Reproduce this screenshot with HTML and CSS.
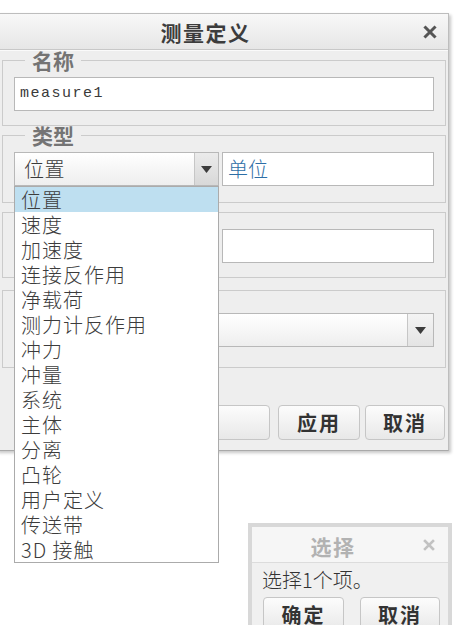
FILE: index.html
```html
<!DOCTYPE html>
<html lang="zh-CN">
<head>
<meta charset="utf-8">
<title>测量定义</title>
<link rel="stylesheet" href="styles.css">
</head>
<body>
<div class="desk">
  <div class="win main-win">
    <div class="titlebar">
      <span class="title">测量定义</span>
      <span class="close">
        <svg width="14" height="14" viewBox="0 0 14 14"><path d="M2.5 2.5 L11.5 11.5 M11.5 2.5 L2.5 11.5" stroke="#555" stroke-width="3" stroke-linecap="square"/></svg>
      </span>
    </div>
    <div class="win-body">
      <fieldset class="group g-name">
        <legend>名称</legend>
        <div class="field mono">measure1</div>
      </fieldset>
      <fieldset class="group g-type">
        <legend>类型</legend>
        <div class="row">
          <div class="select sel-type">
            <span class="sel-text">位置</span>
            <span class="sel-arrow"><svg width="11" height="7" viewBox="0 0 11 7"><polygon points="0,0 11,0 5.5,7" fill="#3c3c3c"/></svg></span>
          </div>
          <div class="field unit">单位</div>
        </div>
      </fieldset>
      <fieldset class="group g-three">
        <legend class="blank"></legend>
        <div class="row">
          <div class="spacer"></div>
          <div class="field"></div>
        </div>
      </fieldset>
      <fieldset class="group g-four">
        <legend class="blank"></legend>
        <div class="select sel-wide">
          <span class="sel-text"></span>
          <span class="sel-arrow wide-arrow"><svg width="11" height="7" viewBox="0 0 11 7"><polygon points="0,0 11,0 5.5,7" fill="#3c3c3c"/></svg></span>
        </div>
      </fieldset>
      <div class="buttons">
        <button class="btn btn-wide">确定</button>
        <button class="btn btn-apply">应用</button>
        <button class="btn btn-cancel">取消</button>
      </div>
    </div>
  </div>

  <ul class="dropdown">
    <li class="active">位置</li>
    <li>速度</li>
    <li>加速度</li>
    <li>连接反作用</li>
    <li>净载荷</li>
    <li>测力计反作用</li>
    <li>冲力</li>
    <li>冲量</li>
    <li>系统</li>
    <li>主体</li>
    <li>分离</li>
    <li>凸轮</li>
    <li>用户定义</li>
    <li>传送带</li>
    <li>3D 接触</li>
  </ul>

  <div class="win sel-win">
    <div class="sel-titlebar">
      <span class="title small-title">选择</span>
      <span class="close small-close">
        <svg width="12" height="12" viewBox="0 0 12 12"><path d="M2 2 L10 10 M10 2 L2 10" stroke="#c2c2c2" stroke-width="2.6" stroke-linecap="square"/></svg>
      </span>
    </div>
    <div class="sel-body">
      <div class="sel-msg">选择1个项。</div>
      <div class="sel-buttons">
        <button class="btn btn-ok">确定</button>
        <button class="btn btn-no">取消</button>
      </div>
    </div>
  </div>
</div>
</body>
</html>
```

FILE: styles.css
```css
* { box-sizing: border-box; }
html, body { margin: 0; padding: 0; }
body {
  background: #fff;
  font-family: "Noto Sans CJK SC", "Noto Sans", sans-serif;
  color: #333;
}
.desk {
  position: relative;
  width: 454px;
  height: 625px;
  overflow: hidden;
  background: #fff;
}

/* ---------- main window ---------- */
.main-win {
  position: absolute;
  left: -4px;
  top: 13px;
  width: 453px;
  background: #eeeeee;
  border: 1px solid #bdbdbd;
  border-bottom-color: #a9a9a9;
  box-shadow: 2px 2px 3px rgba(0, 0, 0, 0.22);
}
.titlebar {
  display: flex;
  height: 36px;
  border-bottom: 1px solid #c8c8c8;
  background: linear-gradient(#f8f8f8, #e6e6e6);
}
.title {
  flex: 1;
  text-align: center;
  font-size: 21px;
  font-weight: bold;
  letter-spacing: 1.5px;
  line-height: 32px;
  padding-top: 2px;
  color: #3c3c3c;
}
.close {
  width: 34px;
  display: flex;
  align-items: center;
  justify-content: center;
  padding-right: 2px;
}
.win-body {
  padding: 1px 2px 10px 5px;
  border-top: 1px solid #fafafa;
}
.group {
  margin: 0;
  min-width: 0;
  border: 1px solid #cbcbcb;
  padding: 8px 11px 14px;
}
.group legend {
  margin-left: 11px;
  padding: 0 7px;
  height: 18px;
  font-size: 21px;
  line-height: 18px;
  font-weight: bold;
  color: #747474;
}
.group legend.blank { width: 60px; }
.g-name { margin-top: -1px; }
.g-type { padding-bottom: 16px; }
.g-four { margin-top: 3px; padding-top: 14px; padding-bottom: 20px; }

.row { display: flex; gap: 3px; }
.spacer { width: 205px; }
.field {
  flex: 1;
  height: 34px;
  background: #fff;
  border: 1px solid #b8b8b8;
  padding-left: 5px;
  font-size: 20px;
  font-weight: 300;
  line-height: 32px;
}
.mono {
  font-family: "Liberation Mono", "DejaVu Sans Mono", monospace;
  font-size: 15px;
  font-weight: normal;
  letter-spacing: 1.5px;
  color: #3a3a3a;
}
.unit { color: #2d6ea6; }

.select {
  display: flex;
  height: 34px;
  border: 1px solid #b8b8b8;
  background: linear-gradient(#ffffff, #eeeeee);
}
.sel-type { width: 205px; }
.sel-text {
  flex: 1;
  padding-left: 9px;
  font-size: 20px;
  font-weight: 300;
  letter-spacing: 0.5px;
  line-height: 32px;
  color: #3a3a3a;
}
.sel-arrow {
  width: 24px;
  border-left: 1px solid #c6c6c6;
  background: linear-gradient(#ebebeb, #d8d8d8);
  display: flex;
  align-items: center;
  justify-content: center;
}
.wide-arrow { width: 26px; background: linear-gradient(#f4f4f4, #e4e4e4); }

.buttons {
  display: flex;
  margin: 37px 1px 0 12px;
}
.btn {
  height: 35px;
  padding: 0;
  font-family: "Noto Sans CJK SC", sans-serif;
  font-size: 20px;
  font-weight: bold;
  letter-spacing: 2px;
  line-height: 33px;
  color: #333;
  background: linear-gradient(#fcfcfc, #e8e8e8);
  border: 1px solid #c6c6c6;
  border-radius: 4px;
}
.btn-wide { flex: 1; }
.btn-apply { width: 82px; margin-left: 8px; }
.btn-cancel { width: 80px; margin-left: 5px; }

/* ---------- dropdown list ---------- */
.dropdown {
  position: absolute;
  left: 14px;
  top: 186px;
  width: 205px;
  margin: 0;
  padding: 0;
  list-style: none;
  background: #fff;
  border: 1px solid #ababab;
}
.dropdown li {
  height: 25px;
  line-height: 25px;
  padding-left: 6px;
  font-size: 20px;
  font-weight: 300;
  letter-spacing: 1px;
  color: #3c3c3c;
  white-space: nowrap;
}
.dropdown li.active { background: #bedff0; }

/* ---------- select window ---------- */
.sel-win {
  position: absolute;
  left: 248px;
  top: 523px;
  width: 204px;
  height: 130px;
  border: 4px solid #d8d8d8;
  background: #f0f0f0;
}
.sel-titlebar {
  display: flex;
  height: 36px;
  border-bottom: 1px solid #dcdcdc;
  background: #f6f6f6;
}
.small-title {
  color: #b2b2b2;
  padding-top: 3px;
}
.small-close { padding-right: 4px; }
.sel-msg {
  padding-left: 10px;
  height: 34px;
  font-size: 20px;
  font-weight: 300;
  line-height: 34px;
  color: #333;
}
.sel-buttons {
  display: flex;
  gap: 16px;
  padding-left: 11px;
}
.btn-ok { width: 81px; }
.btn-no { width: 80px; }
```
